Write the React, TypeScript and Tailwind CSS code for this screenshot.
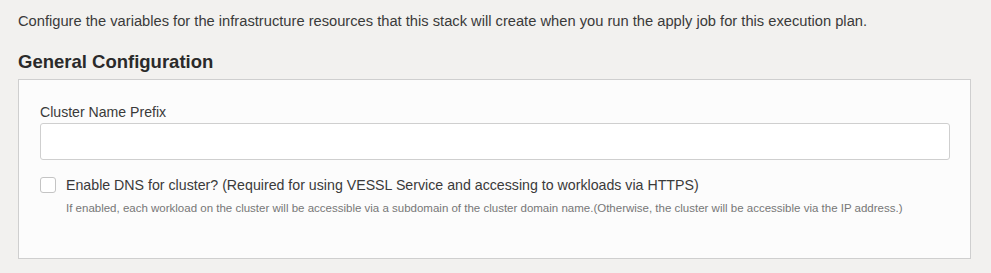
export default function App() {
  return (
    <div
      className="w-[991px] h-[273px] bg-[#f2f1ef] px-[18px] pt-[12px] text-[#333]"
      style={{ fontFamily: "'Liberation Sans', Arial, sans-serif" }}
    >
      <p className="text-[14.7px] leading-[18px] text-[#3a3a3a]">
        Configure the variables for the infrastructure resources that this stack will create when you run the apply job for this execution plan.
      </p>
      <h2 className="mt-[21px] text-[18.5px] leading-[22px] font-bold text-[#2a2a2a]">General Configuration</h2>
      <div className="mt-[6px] w-[953px] h-[180px] bg-[#fcfcfc] border border-[#cfcfcf] px-[21px] pt-[23px]">
        <label className="block text-[14.1px] leading-[18px] text-[#3a3a3a]">Cluster Name Prefix</label>
        <input
          type="text"
          className="mt-[2px] block w-[910px] h-[37px] rounded-[3px] border border-[#cfcfcf] bg-white outline-none px-2 text-[13px]"
        />
        <div className="mt-[16px] flex items-start gap-[10px]">
          <span className="mt-[1px] w-4 h-4 shrink-0 rounded-[3px] border border-[#c4c4c4] bg-white" />
          <div>
            <div className="text-[14.2px] leading-[18px] text-[#3a3a3a]">
              Enable DNS for cluster? (Required for using VESSL Service and accessing to workloads via HTTPS)
            </div>
            <div className="mt-[7px] text-[11.5px] leading-[14px] text-[#777]">
              If enabled, each workload on the cluster will be accessible via a subdomain of the cluster domain name.(Otherwise, the cluster will be accessible via the IP address.)
            </div>
          </div>
        </div>
      </div>
    </div>
  );
}
